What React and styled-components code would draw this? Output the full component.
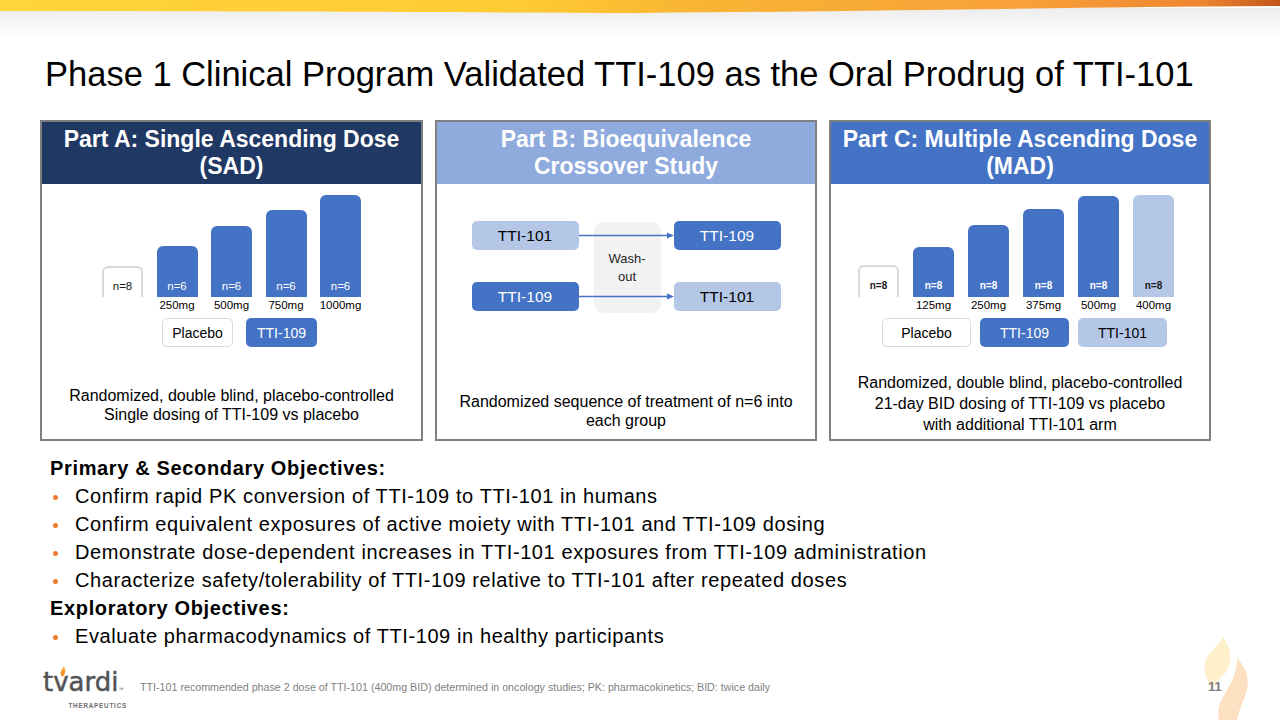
import React from 'react';
import styled, { createGlobalStyle } from 'styled-components';

const BLUE = '#4472C4';
const LIGHT = '#B4C7E7';

const GlobalStyle = createGlobalStyle`
  html, body {
    margin: 0;
    padding: 0;
    background: #fff;
  }
  body {
    font-family: "Liberation Sans", Arial, sans-serif;
    color: #000;
  }
`;

const Slide = styled.div`
  width: 1280px;
  height: 720px;
  overflow: hidden;
  background: #fff;
  display: flex;
  flex-direction: column;
`;

const BandSvg = styled.svg`
  display: block;
  width: 1280px;
  height: 40px;
  flex: none;
`;

const Title = styled.h1`
  margin: 0;
  height: 80px;
  box-sizing: border-box;
  padding: 14px 0 0 45px;
  font-size: 34.5px;
  line-height: 40px;
  font-weight: normal;
  color: #000;
  white-space: nowrap;
`;

const Panels = styled.div`
  display: grid;
  grid-template-columns: 383px 382px 382px;
  column-gap: 12px;
  padding-left: 40px;
  height: 321px;
  flex: none;
`;

const Panel = styled.section`
  border: 2px solid #7f7f7f;
  display: flex;
  flex-direction: column;
  min-width: 0;
`;

const PanelHeader = styled.header`
  height: 62px;
  flex: none;
  background: ${p => p.$bg};
  color: #fff;
  font-weight: bold;
  font-size: 23px;
  line-height: 27px;
  display: flex;
  align-items: center;
  justify-content: center;
  text-align: center;
`;

const PanelBody = styled.div`
  flex: 1;
  display: flex;
  flex-direction: column;
  align-items: center;
  padding-top: 3px;
`;

const Chart = styled.div`
  display: flex;
  align-items: flex-end;
  gap: ${p => p.$gap}px;
  height: 126px;
  padding-right: ${p => p.$pr || 0}px;
`;

const Column = styled.div`
  display: flex;
  flex-direction: column;
  align-items: center;
  width: 41px;
`;

const Bar = styled.div`
  width: 41px;
  height: ${p => p.$h}px;
  box-sizing: border-box;
  border-radius: 6px 6px 0 0;
  display: flex;
  align-items: flex-end;
  justify-content: center;
  padding-bottom: ${p => (p.$small ? 6 : 5)}px;
  font-size: ${p => (p.$small ? 10 : 11.5)}px;
  font-weight: ${p => (p.$small ? 'bold' : 'normal')};
  background: ${p => (p.$tone === 'placebo' ? '#fff' : p.$tone === 'light' ? LIGHT : BLUE)};
  color: ${p => (p.$tone === 'dark' ? '#fff' : '#1a1a1a')};
  border: ${p => (p.$tone === 'placebo' ? '2px solid #d9d9d9' : 'none')};
  border-bottom: none;
`;

const Dose = styled.div`
  height: 16px;
  line-height: 16px;
  font-size: 11.5px;
  white-space: nowrap;
  color: #000;
`;

const Legend = styled.div`
  display: flex;
  gap: ${p => p.$gap}px;
  margin-top: 5px;
  padding-left: ${p => p.$pl || 0}px;
`;

const LegendBox = styled.div`
  width: ${p => p.$w}px;
  height: 29px;
  box-sizing: border-box;
  border-radius: 5px;
  display: flex;
  align-items: center;
  justify-content: center;
  font-size: 14px;
  background: ${p => (p.$tone === 'placebo' ? '#fff' : p.$tone === 'light' ? LIGHT : BLUE)};
  color: ${p => (p.$tone === 'dark' ? '#fff' : '#000')};
  border: ${p => (p.$tone === 'placebo' ? '1px solid #d9d9d9' : 'none')};
`;

const Caption = styled.p`
  margin: ${p => p.$mt}px 0 0;
  font-size: 16px;
  line-height: ${p => p.$lh || 19}px;
  text-align: center;
  color: #000;
  white-space: nowrap;
`;

const Diagram = styled.div`
  display: grid;
  grid-template-columns: 107px 95px 107px;
  grid-template-rows: 29px 32px 29px;
  margin-top: 34px;
`;

const FlowBox = styled.div`
  grid-column: ${p => p.$col};
  grid-row: ${p => p.$row};
  border-radius: 5px;
  display: flex;
  align-items: center;
  justify-content: center;
  font-size: 15.5px;
  background: ${p => (p.$tone === 'light' ? LIGHT : BLUE)};
  color: ${p => (p.$tone === 'light' ? '#000' : '#fff')};
`;

const Washout = styled.div`
  grid-column: 2;
  grid-row: 1 / 4;
  margin: 1px 13px -2px 15px;
  background: #f2f2f2;
  border-radius: 10px;
  display: flex;
  align-items: center;
  justify-content: center;
  text-align: center;
  font-size: 13px;
  line-height: 18px;
  color: #262626;
`;

const ArrowSvg = styled.svg`
  grid-column: 2;
  grid-row: ${p => p.$row};
  width: 95px;
  height: 29px;
  z-index: 1;
`;

const Objectives = styled.div`
  padding: 13px 0 0 50px;
  flex: none;
`;

const ObjHeading = styled.div`
  font-size: 20px;
  font-weight: bold;
  line-height: 28px;
  letter-spacing: 0.65px;
`;

const ObjList = styled.ul`
  list-style: none;
  margin: 0;
  padding: 0;
`;

const ObjItem = styled.li`
  position: relative;
  padding-left: 25px;
  font-size: 20px;
  line-height: 28px;
  letter-spacing: 0.6px;
  white-space: nowrap;

  &::before {
    content: '';
    position: absolute;
    left: 3px;
    top: 13px;
    width: 5px;
    height: 5px;
    border-radius: 50%;
    background: #ed7d31;
  }
`;

const Footer = styled.footer`
  flex: 1;
  display: flex;
  align-items: center;
  padding: 0 0 0 43px;
`;

const Logo = styled.div`
  display: flex;
  flex-direction: column;
  align-items: flex-start;
  width: 86px;
  margin-top: 8px;
`;

const LogoWord = styled.div`
  position: relative;
  font-family: "DejaVu Sans", sans-serif;
  font-size: 26px;
  line-height: 26px;
  color: #545456;
  -webkit-text-stroke: 0.5px #545456;
  white-space: nowrap;

  sup {
    font-family: "Liberation Sans", Arial, sans-serif;
    font-size: 5px;
    vertical-align: 0;
    -webkit-text-stroke: 0;
  }
`;

const LogoSub = styled.div`
  align-self: flex-end;
  font-family: "Liberation Sans", Arial, sans-serif;
  font-size: 6.3px;
  font-weight: bold;
  letter-spacing: 0.8px;
  color: #6d6e70;
  margin: 0 2px 0 0;
`;

const LogoFlame = styled.svg`
  position: absolute;
  left: 17px;
  top: -3px;
  width: 6px;
  height: 11px;
`;

const Footnote = styled.div`
  margin-left: 11px;
  margin-top: 4px;
  font-size: 10.7px;
  color: #7f7f7f;
  flex: 1;
  white-space: nowrap;
`;

const PageNo = styled.div`
  position: relative;
  width: 70px;
  height: 70px;
  margin-right: 10px;
  display: flex;
  align-items: center;
`;

const Watermark = styled.svg`
  position: absolute;
  left: -7px;
  top: -20px;
  width: 60px;
  height: 90px;
`;

const PageNum = styled.span`
  position: relative;
  font-size: 13px;
  font-weight: bold;
  color: #7f7f7f;
  margin-left: 8px;
  margin-top: 2px;
`;

const TopBand = () => (
  <BandSvg viewBox="0 0 1280 40" preserveAspectRatio="none">
    <defs>
      <linearGradient id="band" x1="0" x2="1" y1="0" y2="0">
        <stop offset="0" stopColor="#FFD43C" />
        <stop offset="0.4" stopColor="#FFCB33" />
        <stop offset="0.55" stopColor="#F8B433" />
        <stop offset="0.8" stopColor="#F8A03A" />
        <stop offset="0.94" stopColor="#EE8530" />
        <stop offset="1" stopColor="#C0561A" />
      </linearGradient>
      <linearGradient id="shade" x1="0" x2="0" y1="0" y2="1">
        <stop offset="0" stopColor="#EDEDED" />
        <stop offset="1" stopColor="#FFFFFF" />
      </linearGradient>
    </defs>
    <rect x="0" y="8" width="1280" height="32" fill="url(#shade)" />
    <path d="M0 0 H1280 V6 C1100 7 900 11 640 13 C400 12 200 11 0 11 Z" fill="url(#band)" />
  </BandSvg>
);

const Arrow = ({ row }) => (
  <ArrowSvg $row={row} viewBox="0 0 95 29">
    <line x1="0" y1="14.5" x2="89" y2="14.5" stroke={BLUE} strokeWidth="1.5" />
    <path d="M88 11.5 L95 14.5 L88 17.5 Z" fill={BLUE} />
  </ArrowSvg>
);

const sadBars = [
  { h: 51, dose: '250mg' },
  { h: 71, dose: '500mg' },
  { h: 87, dose: '750mg' },
  { h: 102, dose: '1000mg' },
];

const madBars = [
  { h: 50, dose: '125mg', tone: 'dark' },
  { h: 72, dose: '250mg', tone: 'dark' },
  { h: 88, dose: '375mg', tone: 'dark' },
  { h: 101, dose: '500mg', tone: 'dark' },
  { h: 102, dose: '400mg', tone: 'light' },
];

const objectives = [
  'Confirm rapid PK conversion of TTI-109 to TTI-101 in humans',
  'Confirm equivalent exposures of active moiety with TTI-101 and TTI-109 dosing',
  'Demonstrate dose-dependent increases in TTI-101 exposures from TTI-109 administration',
  'Characterize safety/tolerability of TTI-109 relative to TTI-101 after repeated doses',
];

export default function App() {
  return (
    <>
      <GlobalStyle />
      <Slide>
        <TopBand />
        <Title>Phase 1 Clinical Program Validated TTI-109 as the Oral Prodrug of TTI-101</Title>

        <Panels>
          <Panel>
            <PanelHeader $bg="#203864">Part A: Single Ascending Dose<br />(SAD)</PanelHeader>
            <PanelBody>
              <Chart $gap={13.5}>
                <Column>
                  <Bar $h={31} $tone="placebo">n=8</Bar>
                  <Dose />
                </Column>
                {sadBars.map(b => (
                  <Column key={b.dose}>
                    <Bar $h={b.h} $tone="dark">n=6</Bar>
                    <Dose>{b.dose}</Dose>
                  </Column>
                ))}
              </Chart>
              <Legend $gap={13} $pl={16}>
                <LegendBox $w={71} $tone="placebo">Placebo</LegendBox>
                <LegendBox $w={71} $tone="dark">TTI-109</LegendBox>
              </Legend>
              <Caption $mt={39}>
                Randomized, double blind, placebo-controlled<br />
                Single dosing of TTI-109 vs placebo
              </Caption>
            </PanelBody>
          </Panel>

          <Panel>
            <PanelHeader $bg="#8FAADC">Part B: Bioequivalence<br />Crossover Study</PanelHeader>
            <PanelBody>
              <Diagram>
                <FlowBox $col={1} $row={1} $tone="light">TTI-101</FlowBox>
                <FlowBox $col={3} $row={1} $tone="dark">TTI-109</FlowBox>
                <FlowBox $col={1} $row={3} $tone="dark">TTI-109</FlowBox>
                <FlowBox $col={3} $row={3} $tone="light">TTI-101</FlowBox>
                <Washout>Wash-<br />out</Washout>
                <Arrow row={1} />
                <Arrow row={3} />
              </Diagram>
              <Caption $mt={81}>
                Randomized sequence of treatment of n=6 into<br />
                each group
              </Caption>
            </PanelBody>
          </Panel>

          <Panel>
            <PanelHeader $bg={BLUE}>Part C: Multiple Ascending Dose<br />(MAD)</PanelHeader>
            <PanelBody>
              <Chart $gap={14} $pr={8}>
                <Column>
                  <Bar $h={32} $tone="placebo" $small>n=8</Bar>
                  <Dose />
                </Column>
                {madBars.map(b => (
                  <Column key={b.dose}>
                    <Bar $h={b.h} $tone={b.tone} $small>n=8</Bar>
                    <Dose>{b.dose}</Dose>
                  </Column>
                ))}
              </Chart>
              <Legend $gap={9} $pl={9}>
                <LegendBox $w={89} $tone="placebo">Placebo</LegendBox>
                <LegendBox $w={89} $tone="dark">TTI-109</LegendBox>
                <LegendBox $w={89} $tone="light">TTI-101</LegendBox>
              </Legend>
              <Caption $mt={25} $lh={21}>
                Randomized, double blind, placebo-controlled<br />
                21-day BID dosing of TTI-109 vs placebo<br />
                with additional TTI-101 arm
              </Caption>
            </PanelBody>
          </Panel>
        </Panels>

        <Objectives>
          <ObjHeading>Primary &amp; Secondary Objectives:</ObjHeading>
          <ObjList>
            {objectives.map(o => <ObjItem key={o}>{o}</ObjItem>)}
          </ObjList>
          <ObjHeading>Exploratory Objectives:</ObjHeading>
          <ObjList>
            <ObjItem>Evaluate pharmacodynamics of TTI-109 in healthy participants</ObjItem>
          </ObjList>
        </Objectives>

        <Footer>
          <Logo>
            <LogoWord>
              <LogoFlame viewBox="0 0 6 11">
                <defs>
                  <linearGradient id="lf" x1="0" x2="0" y1="0" y2="1">
                    <stop offset="0" stopColor="#FBB03B" />
                    <stop offset="1" stopColor="#F58220" />
                  </linearGradient>
                </defs>
                <path d="M3.5 0 C5.5 3 6 5.5 4.5 8 C3.7 9.3 3 10 2.5 11 C0.5 9 0 6.5 1.2 4.5 C2.2 3 3.3 2 3.5 0 Z" fill="url(#lf)" />
              </LogoFlame>
              tvardi<sup>™</sup>
            </LogoWord>
            <LogoSub>THERAPEUTICS</LogoSub>
          </Logo>
          <Footnote>
            TTI-101 recommended phase 2 dose of TTI-101 (400mg BID) determined in oncology studies; PK: pharmacokinetics; BID: twice daily
          </Footnote>
          <PageNo>
            <Watermark viewBox="0 0 60 90">
              <path d="M30 7 C38 18 40 30 33 42 C29 48 23 52 20 58 C13 50 9 40 13 30 C17 20 27 15 30 7 Z" fill="#FFF0CC" />
              <path d="M44 28 C54 38 58 52 52 66 C48 76 45 84 44 90 L26 90 C24 82 26 72 33 62 C39 52 44 42 44 28 Z" fill="#FDDFC2" />
            </Watermark>
            <PageNum>11</PageNum>
          </PageNo>
        </Footer>
      </Slide>
    </>
  );
}
